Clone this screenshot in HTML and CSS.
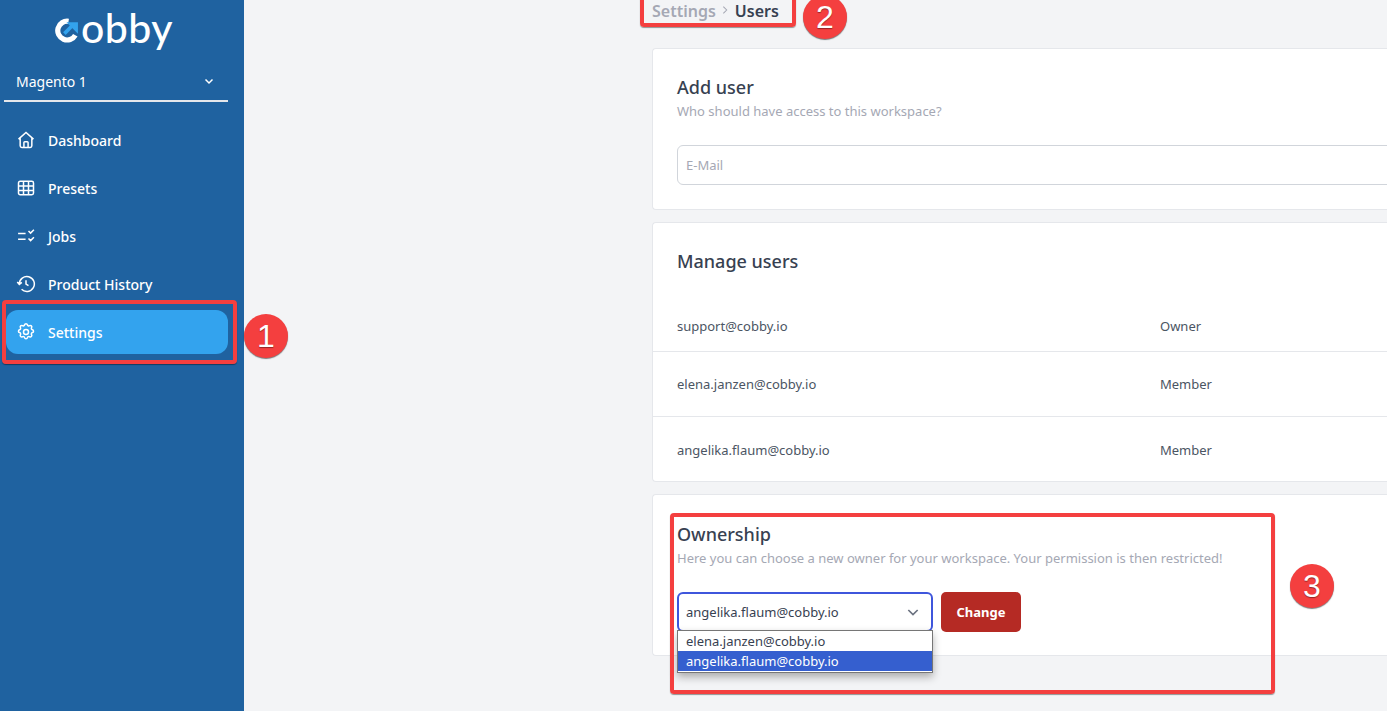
FILE: index.html
```html
<!DOCTYPE html>
<html lang="en">
<head>
    <meta charset="UTF-8">
    <title>Users</title>
    <link rel="stylesheet" href="styles.css">
</head>
<body>

    <!-- Sidebar -->
    <div class="sidebar">
        <div class="logo">
            <svg class="logo-c" viewBox="0 0 24 24" width="25" height="25">
                <path d="M19.5 16.5A9 9 0 1 1 13 3.2" fill="none" stroke="#fff" stroke-width="5"/>
                <path d="M9 15l7-7" fill="none" stroke="#33a3ee" stroke-width="3.5"/>
                <path d="M11 4h11v11z" fill="#33a3ee"/>
            </svg>
            <span>obby</span>
        </div>
        <div class="workspace">
            <span>Magento 1</span>
            <svg viewBox="0 0 24 24" width="12" height="12" fill="none" stroke="#fff" stroke-width="3"><path d="M5 9l7 7 7-7"/></svg>
        </div>
        <ul class="nav">
            <li>
                <svg viewBox="0 0 24 24" class="nav-icon"><path d="M3 11l9-8 9 8M5 9.500V19a2 2 0 0 0 2 2h10a2 2 0 0 0 2-2V9.500M9.500 21v-6a1 1 0 0 1 1-1h3a1 1 0 0 1 1 1v6"/></svg>
                Dashboard
            </li>
            <li>
                <svg viewBox="0 0 24 24" class="nav-icon"><rect x="3" y="4" width="18" height="16" rx="2"/><path d="M3 9.500h18M3 15h18M9 4v16M15 4v16"/></svg>
                Presets
            </li>
            <li>
                <svg viewBox="0 0 24 24" class="nav-icon"><path d="M2.500 9h9M2.500 16h9M15 6l2.500 2.500L21.500 4.500M15 15l2.500 2.500 4-4"/></svg>
                Jobs
            </li>
            <li>
                <svg viewBox="0 0 24 24" class="nav-icon"><path d="M4 12a9 9 0 1 1 2.700 6.400M1.500 9.500L4 12.500l3-2.500M12 7.500V12l3 2"/></svg>
                Product History
            </li>
            <li class="active">
                <svg viewBox="0 0 24 24" class="nav-icon"><path d="M10.300 3.300c.4-1.800 3-1.800 3.400 0a1.700 1.700 0 0 0 2.600 1.100c1.500-.9 3.300.8 2.400 2.400a1.700 1.700 0 0 0 1 2.500c1.800.5 1.800 3 0 3.400a1.700 1.700 0 0 0-1 2.600c.9 1.500-.9 3.300-2.400 2.400a1.700 1.700 0 0 0-2.600 1c-.4 1.800-3 1.800-3.400 0a1.700 1.700 0 0 0-2.600-1c-1.500.9-3.300-.9-2.400-2.400a1.700 1.700 0 0 0-1-2.600c-1.800-.4-1.800-2.900 0-3.400a1.700 1.700 0 0 0 1-2.500c-.9-1.600.9-3.300 2.400-2.400a1.700 1.700 0 0 0 2.600-1.100z"/><circle cx="12" cy="12" r="3"/></svg>
                Settings
            </li>
        </ul>
    </div>

    <!-- Main Content -->
    <div class="content">
        <div class="breadcrumb">
            <span class="crumb-parent">Settings</span>
            <svg viewBox="0 0 24 24" width="10" height="10" fill="none" stroke="#a5a8b4" stroke-width="2.500"><path d="M8 4l8 8-8 8"/></svg>
            <span class="crumb-current">Users</span>
        </div>

        <div class="card card-add">
            <h3>Add user</h3>
            <p class="hint">Who should have access to this workspace?</p>
            <div class="input">E-Mail</div>
        </div>

        <div class="card card-manage">
            <h3>Manage users</h3>
            <div class="user-list">
                <div class="user-row"><span class="user-mail">support@cobby.io</span><span>Owner</span></div>
                <div class="user-row"><span class="user-mail">elena.janzen@cobby.io</span><span>Member</span></div>
                <div class="user-row"><span class="user-mail">angelika.flaum@cobby.io</span><span>Member</span></div>
            </div>
        </div>

        <div class="card card-owner">
            <h3>Ownership</h3>
            <p class="hint">Here you can choose a new owner for your workspace. Your permission is then restricted!</p>
            <div class="owner-form">
                <div class="select">
                    <span>angelika.flaum@cobby.io</span>
                    <svg viewBox="0 0 24 24" width="16" height="16" fill="none" stroke="#6b7280" stroke-width="2.500"><path d="M5 9l7 7 7-7"/></svg>
                </div>
                <button class="change-btn">Change</button>
            </div>
            <div class="select-menu">
                <div class="option">elena.janzen@cobby.io</div>
                <div class="option selected">angelika.flaum@cobby.io</div>
            </div>
        </div>
    </div>

    <!-- Annotations -->
    <div class="mark mark-one"></div>
    <div class="mark mark-two"></div>
    <div class="mark mark-three"></div>
    <div class="badge badge-one">1</div>
    <div class="badge badge-two">2</div>
    <div class="badge badge-three">3</div>

</body>
</html>
```

FILE: styles.css
```css
/* Global Styles */
* {
    margin: 0;
    padding: 0;
    box-sizing: border-box;
    font-family: "Noto Sans", Arial, sans-serif;
}

html, body {
    height: 100%;
    overflow: hidden;
}

body {
    display: flex;
    background-color: #f3f4f6;
    color: #374151;
}

/* Sidebar */
.sidebar {
    width: 244px;
    height: 711px;
    flex-shrink: 0;
    background-color: #1f62a0;
    color: white;
    padding: 0 16px 0 4px;
}

.logo {
    height: 64px;
    display: flex;
    justify-content: center;
    align-items: flex-start;
    padding-right: 4px;
}

.logo-c {
    margin-top: 18px;
    margin-right: 1px;
}

.logo span {
    font-family: Lato, sans-serif;
    font-size: 41px;
    line-height: 56px;
    font-weight: 500;
    letter-spacing: 0.5px;
}

.workspace {
    height: 38px;
    display: flex;
    justify-content: space-between;
    align-items: center;
    border-bottom: 2px solid #e5e7eb;
    padding: 0 13px 2px 12px;
    font-size: 14px;
}

.nav {
    list-style: none;
    margin-top: 14px;
}

.nav li {
    height: 48px;
    display: flex;
    align-items: center;
    gap: 12px;
    padding-left: 12px;
    font-size: 14px;
    font-weight: 500;
}

.nav li.active {
    height: 44px;
    margin: 2px 0 0 2px;
    padding-left: 10px;
    background-color: #33a3ee;
    border-radius: 12px;
}

.nav-icon {
    width: 20px;
    height: 20px;
    fill: none;
    stroke: white;
    stroke-width: 1.800;
    flex-shrink: 0;
}

/* Main Content */
.content {
    margin-left: 408px;
    width: 900px;
    flex-shrink: 0;
}

.breadcrumb {
    height: 48px;
    display: flex;
    align-items: flex-start;
    gap: 4px;
    font-size: 16px;
    font-weight: 600;
    line-height: 22px;
}

.crumb-parent {
    color: #a5a8b4;
}

.breadcrumb svg {
    margin-top: 5px;
}

.crumb-current {
    color: #374151;
    margin-left: 1px;
}

.card {
    position: relative;
    background: white;
    border: 1px solid #e5e7eb;
    border-radius: 4px 0 0 4px;
    border-right: none;
    padding: 24px;
    width: 900px;
    margin-bottom: 12px;
}

.card h3 {
    font-size: 18px;
    font-weight: 500;
    line-height: 28px;
    color: #374151;
}

.hint {
    font-size: 13px;
    line-height: 20px;
    color: #a5a8b4;
}

.card-add {
    height: 162px;
}

.input {
    margin-top: 24px;
    height: 40px;
    border: 1px solid #d1d5db;
    border-radius: 6px;
    padding-left: 8px;
    font-size: 13px;
    line-height: 38px;
    color: #a5a8b4;
}

.card-manage {
    height: 260px;
    padding: 24px 0 0;
}

.card-manage h3 {
    padding-left: 24px;
}

.user-list {
    margin-top: 11px;
}

.user-row {
    height: 65px;
    display: flex;
    align-items: center;
    font-size: 13px;
    color: #4b5563;
    padding-left: 24px;
    border-bottom: 1px solid #e5e7eb;
}

.user-row:first-child {
    height: 66px;
    padding-top: 14px;
}

.user-row:last-child {
    border-bottom: none;
}

.user-mail {
    width: 483px;
}

.card-owner {
    height: 162px;
    padding-top: 25px;
    margin-bottom: 0;
}

.owner-form {
    margin-top: 24px;
    display: flex;
    gap: 8px;
}

.select {
    width: 256px;
    height: 40px;
    display: flex;
    align-items: center;
    justify-content: space-between;
    border: 2px solid #3f56dc;
    border-radius: 6px;
    padding: 0 10px 0 7px;
    font-size: 13px;
    color: #374151;
}

.change-btn {
    width: 80px;
    height: 40px;
    border: none;
    border-radius: 5px;
    background: #b52a24;
    color: white;
    font-size: 13px;
    font-weight: 700;
}

/* Open select list, sits over the card edge */
.select-menu {
    position: absolute;
    left: 24px;
    top: 135px;
    width: 256px;
    height: 43px;
    background: white;
    border: 1px solid #767676;
    box-shadow: 0 4px 8px rgba(0, 0, 0, 0.3);
    font-size: 13px;
}

.option {
    height: 20px;
    line-height: 20px;
    padding-left: 8px;
    color: #374151;
}

.option.selected {
    background: #355fcf;
    color: white;
}

/* Annotations */
.mark {
    position: absolute;
    border: 4px solid #f43f3f;
    border-radius: 4px;
    box-shadow: 0 1px 1px rgba(0, 0, 0, 0.4);
}

.mark-one {
    left: 2px;
    top: 300px;
    width: 235px;
    height: 64px;
}

.mark-two {
    left: 640px;
    top: -8px;
    width: 156px;
    height: 35px;
}

.mark-three {
    left: 670px;
    top: 513px;
    width: 605px;
    height: 181px;
}

.badge {
    position: absolute;
    width: 44px;
    height: 44px;
    border-radius: 50%;
    background: #f43f3f;
    box-shadow: 0 1px 1px rgba(0, 0, 0, 0.5);
    color: white;
    font-family: "Liberation Sans", Arial, sans-serif;
    font-size: 32px;
    line-height: 44px;
    text-align: center;
    text-shadow: 0 1px 1px rgba(0, 0, 0, 0.4);
}

.badge-one {
    left: 244px;
    top: 314px;
}

.badge-two {
    left: 803px;
    top: -5px;
}

.badge-three {
    left: 1290px;
    top: 564px;
}
```
